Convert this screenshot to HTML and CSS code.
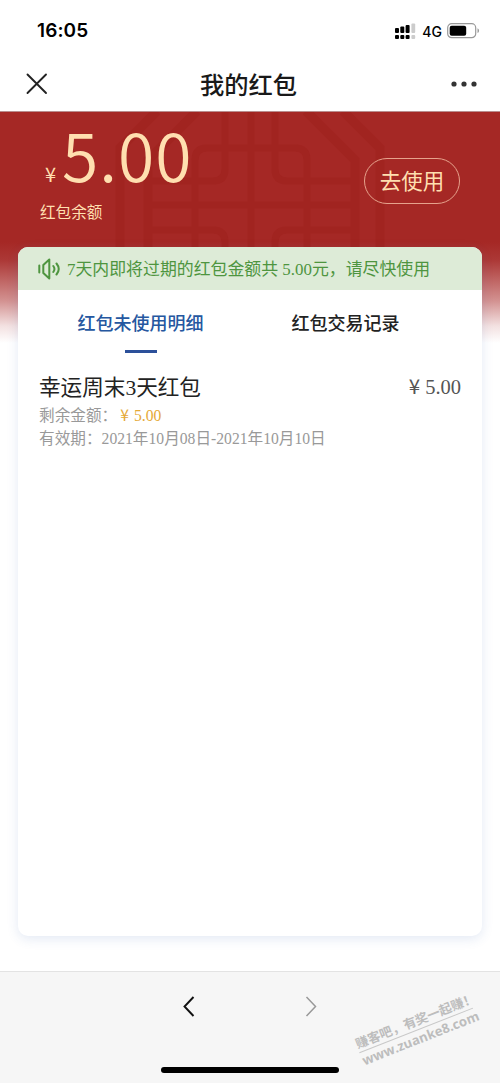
FILE: index.html
```html
<!DOCTYPE html>
<html lang="zh-CN">
<head>
<meta charset="utf-8">
<meta name="viewport" content="width=device-width">
<title>我的红包</title>
<link rel="stylesheet" href="styles.css">
</head>
<body>
<div class="screen">
  <header class="status">
    <span class="time">16:05</span>
    <div class="indicators">
      <svg class="signal" width="21" height="17" viewBox="0 0 21 17">
        <g fill="#000"><rect x="0" y="5" width="4" height="5" rx="1"/><rect x="5.3" y="3.5" width="4" height="6.5" rx="1"/><rect x="10.6" y="2" width="4" height="8" rx="1"/><rect x="0" y="12" width="4" height="4" rx="1"/><rect x="5.3" y="12" width="4" height="4" rx="1"/><rect x="10.6" y="12" width="4" height="4" rx="1"/></g>
        <g fill="#ccc"><rect x="16.4" y="0.5" width="3.8" height="9.5" rx="1"/><rect x="16.4" y="12" width="3.8" height="4" rx="1"/></g>
      </svg>
      <span class="network">4G</span>
      <svg class="battery" width="33" height="16" viewBox="0 0 33 16">
        <rect x=".7" y=".7" width="28" height="14" rx="4" fill="none" stroke="#999" stroke-width="1.2"/>
        <rect x="2.7" y="2.7" width="16.5" height="10" rx="2" fill="#000"/>
        <path d="M30.5 5.3q1.6.8 1.6 2.4t-1.6 2.4z" fill="#999"/>
      </svg>
    </div>
  </header>
  <nav class="titlebar">
    <svg class="close" width="22" height="22" viewBox="0 0 22 22"><path d="M1.5 1.5l18.5 18.5M20 1.5l-18.5 18.5" stroke="#222" stroke-width="1.9" stroke-linecap="round"/></svg>
    <h1 class="title">我的红包</h1>
    <svg class="more" width="26" height="6" viewBox="0 0 26 6"><circle cx="3" cy="3" r="2.6"/><circle cx="13" cy="3" r="2.6"/><circle cx="23" cy="3" r="2.6"/></svg>
  </nav>
  <main class="page">
    <svg class="pattern" width="500" height="136" viewBox="0 112 500 136">
      <g fill="none" stroke="#a12420" stroke-width="7">
        <path d="M251 111V248M148 205H355M195 248V160Q195 148 207 148H295Q307 148 307 160V248"/>
        <path d="M225 111V169Q225 181 213 181H148M275 111V169Q275 181 287 181H355"/>
        <path d="M148 230H213Q225 230 225 242V248M355 230H287Q275 230 275 242V248"/>
        <path stroke-width="9" d="M148 248V160L197 111M355 248V160L306 111M120 248V148L157 111M380 248V148L343 111"/>
      </g>
    </svg>
    <section class="balance">
      <div class="summary">
        <div class="amount"><span class="yen">¥</span><span class="value">5.00</span></div>
        <div class="caption">红包余额</div>
      </div>
      <button class="use">去使用</button>
    </section>
    <section class="card">
      <div class="notice">
        <svg width="24" height="22" viewBox="0 0 24 22" fill="none" stroke="#4e953f" stroke-width="2" stroke-linecap="round" stroke-linejoin="round"><path d="M2.3 7.5v7M6.3 7L12.3 1.5V20.5L6.3 15ZM16.3 8q2.3 3 0 6M19.5 5.5q4.5 5.5 0 11"/></svg>
        <span>7天内即将过期的红包金额共 5.00元，请尽快使用</span>
      </div>
      <div class="tabs">
        <div class="tab active">红包未使用明细</div>
        <div class="tab">红包交易记录</div>
      </div>
      <article class="item">
        <div class="item-head"><span class="name">幸运周末3天红包</span><span class="price"><i class="sign">¥</i>5.00</span></div>
        <div class="detail">剩余金额：<span class="remain"><i class="sign">¥</i>5.00</span></div>
        <div class="detail">有效期：2021年10月08日-2021年10月10日</div>
      </article>
    </section>
  </main>
  <footer class="toolbar">
    <div class="arrows">
      <svg width="12" height="21" viewBox="0 0 12 21"><path d="M10.5 1L1.5 10.5l9 9.5" fill="none" stroke="#111" stroke-width="1.9"/></svg>
      <svg width="12" height="21" viewBox="0 0 12 21"><path d="M1.5 1l9 9.5-9 9.5" fill="none" stroke="#999" stroke-width="1.5"/></svg>
    </div>
    <div class="home"></div>
    <div class="watermark"><div class="slogan">赚客吧，有奖一起赚！</div><div class="site">www.zuanke8.com</div></div>
  </footer>
</div>
</body>
</html>
```
FILE: styles.css
```css
* { box-sizing: border-box; }
body { margin: 0; background: #fff; font-family: "Liberation Serif", "Noto Sans CJK SC", sans-serif; }
svg { display: block; flex: none; }
.screen { width: 500px; height: 1083px; display: flex; flex-direction: column; overflow: hidden; }

.status { height: 60px; padding: 2px 20px 0 37px; display: flex; align-items: center; justify-content: space-between; font-family: Inter, sans-serif; color: #000; }
.time { font-size: 19px; font-weight: 600; line-height: 24px; letter-spacing: 0.1px; }
.indicators { display: flex; align-items: center; }
.network { font-size: 14px; font-weight: 500; margin: 0 5px 0 6px; }

.titlebar { height: 52px; padding: 0 23px 3px 26px; display: flex; align-items: center; justify-content: space-between; border-bottom: 1px solid #b98e8e; }
.title { margin: 0 2px 0 0; font: 500 24.3px/34px "Noto Sans CJK SC", sans-serif; color: #191919; }
.more { fill: #333; }

.page { position: relative; height: 859px; padding: 0 18px; background: linear-gradient(#a52825 0, #a52825 130px, #ac3836 148px, #d39291 189px, #f3e1e1 214px, #fff 231px); }
.pattern { position: absolute; left: 0; top: 0; }
.balance { position: relative; height: 135px; padding: 0 22px; display: flex; justify-content: space-between; font-family: "Noto Sans CJK SC", sans-serif; color: #ffdfb0; }
.amount { height: 89px; display: flex; align-items: baseline; line-height: 82px; }
.yen { width: 22px; padding-left: 5px; font-size: 20px; }
.value { font-size: 66px; font-weight: 350; letter-spacing: 1px; }
.caption { font-size: 15.6px; line-height: 21px; }
.use { width: 96px; height: 46px; margin: 46px 0 0; padding: 0 0 2px; border: 1px solid #e6a28c; border-radius: 23px; background: none; color: #ffdfb0; font: 21.5px/40px "Noto Sans CJK SC", sans-serif; }

.card { position: relative; height: 689px; border-radius: 10px; background: #fff; box-shadow: 0 3px 12px rgba(60, 100, 180, .14); overflow: hidden; }
.notice { height: 43px; padding: 0 0 3px 19px; display: flex; align-items: center; gap: 6px; background: #ddebd7; color: #4e953f; font-size: 16.9px; white-space: nowrap; }
.notice svg { margin-top: 4px; }
.tabs { height: 63px; padding: 0 20px; display: grid; grid-template-columns: 205px 205px; }
.tab { display: flex; flex-direction: column; align-items: center; font: 500 18px/64px "Noto Sans CJK SC", sans-serif; color: #222; }
.active { color: #2557a0; }
.active::after { content: ""; width: 32px; height: 3px; margin-top: -4px; background: #2c509a; }

.item { padding: 15px 21px; }
.item-head { height: 34px; display: flex; align-items: center; justify-content: space-between; }
.name { font-size: 21.6px; color: #222; }
.price { font-size: 20.5px; color: #555; }
.sign { font-family: "Noto Sans CJK SC", sans-serif; font-style: normal; margin: 0 5px 0 0; }
.detail { height: 24px; font-size: 15.65px; line-height: 25px; color: #999; white-space: nowrap; }
.remain { margin-left: 3px; color: #e5a937; }

.toolbar { position: relative; height: 112px; border-top: 1px solid #e3e3e3; background: #f6f6f6; }
.arrows { padding-top: 24px; display: flex; justify-content: center; gap: 110px; }
.home { width: 178px; height: 6px; margin: 50px auto 0; border-radius: 3px; background: #000; }
.watermark { position: absolute; left: 355px; top: 40px; width: 122px; color: #bdbdbd; transform: rotate(-21.5deg); white-space: nowrap; }
.slogan { border-bottom: 1px solid #c8c8c8; font: 700 12.8px/18px "Noto Sans CJK SC", sans-serif; }
.site { font: 700 13.2px/17px "Open Sans", sans-serif; text-align: center; }
```
